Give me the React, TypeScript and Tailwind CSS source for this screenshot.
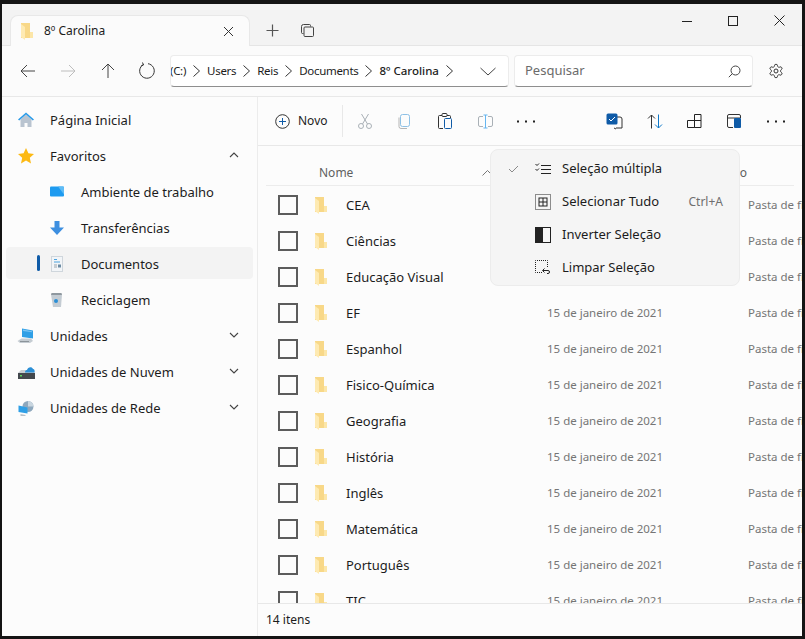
const folders = ["CEA", "Ciências", "Educação Visual", "EF", "Espanhol", "Fisico-Química", "Geografia", "História", "Inglês", "Matemática", "Português", "TIC"];

function FolderIcon({ className }: { className?: string }) {
  return (
    <svg className={className} width="12" height="17" viewBox="0 0 12 17">
      <path d="M0 0h9v15H0z" fill="#f8d888" />
      <path d="M9 9h3v6H9z" fill="#fce6a8" />
      <path d="M0 1l4 3v13l-4-3z" fill="#feeab2" />
    </svg>
  );
}

function Stroke({ children, size = 20, className }: { children: React.ReactNode; size?: number; className?: string }) {
  return (
    <svg className={className} width={size} height={size} viewBox="0 0 20 20" fill="none" stroke="currentColor" strokeWidth="1">
      {children}
    </svg>
  );
}

function Chevron({ up }: { up?: boolean }) {
  return (
    <svg className="ml-auto mr-[14px]" width="10" height="6" viewBox="0 0 10 6" fill="none" stroke="#444" strokeWidth="1.1">
      <path d={up ? "M1 5l4-4 4 4" : "M1 1l4 4 4-4"} />
    </svg>
  );
}

function HomeIcon() {
  return (
    <svg width="18" height="18" viewBox="0 0 18 18">
      <path d="M3.5 8.5L9 3.5l5.500 5V16h-4v-4h-3v4h-4z" fill="#b9c4d0" />
      <path d="M1 8.500L9 1.500l8 7-1.200 1L9 3.500 2.200 9.500z" fill="#2b9be8" />
    </svg>
  );
}

function StarIcon() {
  return (
    <svg width="18" height="18" viewBox="0 0 18 18">
      <path d="M9 1l2.400 5.300 5.600.6-4.200 3.800 1.200 5.700L9 13.500l-5 2.900 1.200-5.700L1 6.900l5.600-.6z" fill="#fcb913" />
    </svg>
  );
}

function DesktopIcon() {
  return (
    <svg width="16" height="14" viewBox="0 0 16 14">
      <rect x="1" y="1.500" width="14" height="10" rx="1" fill="#1e9bf0" />
      <path d="M9 1.500h5a1 1 0 0 1 1 1v7z" fill="#5fbcf6" />
    </svg>
  );
}

function DownloadIcon() {
  return (
    <svg width="16" height="16" viewBox="0 0 16 16">
      <path d="M5.500 1h5v6.500H15L8 15 1 7.500h4.500z" fill="#3d8fe0" />
    </svg>
  );
}

function DocsIcon() {
  return (
    <svg width="14" height="16" viewBox="0 0 14 16">
      <rect x="1.500" y="0.500" width="11" height="15" fill="#f2f5f8" stroke="#cfd6dc" />
      <path d="M4 3.500h3M4 6h6" stroke="#4da3de" />
      <path d="M4 9h3M4 11h3" stroke="#9aa5ad" />
      <rect x="8" y="8.500" width="3" height="3" fill="#6b8ba3" />
    </svg>
  );
}

function BinIcon() {
  return (
    <svg width="14" height="16" viewBox="0 0 14 16">
      <path d="M1 2.500h11L11 15H3z" fill="#c4ccd3" />
      <path d="M1.500 1h10l.5 2H1z" fill="#8f989f" />
      <circle cx="6" cy="9" r="2" fill="#2b8fd6" />
    </svg>
  );
}

function PcIcon() {
  return (
    <svg width="18" height="16" viewBox="0 0 18 16">
      <path d="M5 0.500l11 2v8l-11-1.500z" fill="#2f9fe6" />
      <path d="M6 1.500l9 1.700v1L6 3z" fill="#7cc4f2" />
      <path d="M0.500 13l4-2.500h9.500l2 2.500-3 2H3z" fill="#c5ccd2" />
      <path d="M3 13.500h9" stroke="#8c949a" />
    </svg>
  );
}

function CloudDriveIcon() {
  return (
    <svg width="17" height="13" viewBox="0 0 17 13">
      <path d="M3 4h12l2 3H0z" fill="#c9ced3" />
      <path d="M0 7h17v6H0z" fill="#43484d" />
      <rect x="2" y="9" width="2" height="1.500" fill="#5fd35f" />
      <path d="M7 6.500c0-1.500.5-2.500 2-2.500C9.500 1 14 0 15 3c1.500 0 2 2 1.500 3.500z" fill="#2b8fd6" />
    </svg>
  );
}

function NetIcon() {
  return (
    <svg width="16" height="15" viewBox="0 0 16 15">
      <circle cx="10" cy="5.500" r="5.500" fill="#8fa8bd" />
      <path d="M10 0a5.500 5.500 0 0 1 5.500 5.500H10z" fill="#c9d6e0" />
      <path d="M0.500 4.500l9 2v6l-9-1.500z" fill="#2f9fe6" />
      <path d="M2.500 13l5 1v1h-5z" fill="#b8c0c7" />
    </svg>
  );
}

function SideItem({ icon, label, child, active, chevron }: { icon: React.ReactNode; label: string; child?: boolean; active?: boolean; chevron?: "up" | "down" }) {
  return (
    <div className={`relative mx-1 flex h-8 items-center rounded-[4px] ${active ? "bg-[#f3f3f3]" : ""} ${child ? "pl-[41px]" : "pl-[10px]"}`}>
      {active && <div className="absolute left-[31px] top-[8px] h-4 w-[3px] rounded-sm bg-[#0f5ba7]" />}
      <span className="flex w-[20px] justify-center pt-[2px]">{icon}</span>
      <span className={`ml-[14px] whitespace-nowrap pt-[3px] text-[13px]`}>{label}</span>
      {chevron && <Chevron up={chevron === "up"} />}
    </div>
  );
}

function Row({ name }: { name: string }) {
  return (
    <div className="flex h-9 shrink-0 items-center whitespace-nowrap text-[13px]">
      <div className="ml-[12px] h-5 w-5 shrink-0 border-2 border-[#5c5c5c]" />
      <FolderIcon className="ml-[17px] shrink-0" />
      <span className="ml-[19px] w-[201px] shrink-0 pt-[2px]">{name}</span>
      <span className="w-[201px] shrink-0 text-[11.500px] text-[#757575]">15 de janeiro de 2021</span>
      <span className="text-[11.500px] text-[#757575]">Pasta de ficheiros</span>
    </div>
  );
}

function MenuItem({ icon, label, check, shortcut }: { icon: React.ReactNode; label: string; check?: boolean; shortcut?: string }) {
  return (
    <div className="flex h-[33px] items-center text-[13px]">
      <span className="flex w-[44px] justify-center text-[#8a8a8a]">
        {check && (
          <svg width="11" height="8" viewBox="0 0 11 8" fill="none" stroke="currentColor" strokeWidth="1"><path d="M1 4l3 3 6-6" /></svg>
        )}
      </span>
      <span className="flex w-[27px] shrink-0 justify-start">{icon}</span>
      <span className="whitespace-nowrap">{label}</span>
      {shortcut && <span className="ml-auto mr-4 text-xs text-[#6f6f6f]">{shortcut}</span>}
    </div>
  );
}

export default function App() {
  return (
    <div className="h-[639px] w-[805px] overflow-hidden bg-[#141414] pb-[3px] pl-[2px] pr-[3px] pt-1 font-['Noto_Sans','Open_Sans',sans-serif] text-[#1c1c1c]">
      <div className="relative flex h-[632px] w-[800px] flex-col overflow-hidden bg-[#fcfcfc]">
        {/* title bar */}
        <div className="flex h-[42px] shrink-0 items-end border-b border-[#e5e5e5] bg-[#f3f3f3]">
          <div className="relative top-px ml-2 flex h-[31px] w-[240px] items-center rounded-t-lg border border-b-0 border-[#e8e8e8] bg-[#fbfbfb] pl-[10px]">
            <FolderIcon />
            <span className="ml-[11px] text-xs">8º Carolina</span>
            <svg className="ml-auto mr-[15px]" width="11" height="11" viewBox="0 0 11 11" fill="none" stroke="#333" strokeWidth="1"><path d="M1 1l9 9M10 1l-9 9" /></svg>
          </div>
          <svg className="mb-[8px] ml-[16px]" width="13" height="13" viewBox="0 0 13 13" fill="none" stroke="#555" strokeWidth="1.2"><path d="M6.500 0.500v12M0.500 6.500h12" /></svg>
          <svg className="mb-[8px] ml-[22px]" width="13" height="13" viewBox="0 0 13 13" fill="none" stroke="#444" strokeWidth="1"><path d="M2.500 9.500h-1a1 1 0 0 1-1-1v-6a2 2 0 0 1 2-2h6a1 1 0 0 1 1 1v1" /><rect x="3" y="3" width="9.500" height="9.500" rx="1" /></svg>
          <div className="mb-auto ml-auto flex h-[41px] items-center gap-[36px] pb-[8px] pr-[17px]">
            <svg width="10" height="10" viewBox="0 0 10 10" fill="none" stroke="#222"><path d="M0 5.500h10" /></svg>
            <svg width="10" height="10" viewBox="0 0 10 10" fill="none" stroke="#222"><rect x="0.500" y="0.500" width="9" height="9" /></svg>
            <svg width="11" height="11" viewBox="0 0 11 11" fill="none" stroke="#222"><path d="M0.500 0.500l10 10M10.500 0.500l-10 10" /></svg>
          </div>
        </div>

        {/* address bar */}
        <div className="flex h-[51px] shrink-0 items-center border-b border-[#e8e8e8] bg-[#fbfbfb] pl-[16px]">
          <Stroke className="text-[#444]"><path d="M3 10h14M3 10l6-6M3 10l6 6" /></Stroke>
          <Stroke className="ml-[20px] text-[#bdbdbd]"><path d="M3 10h14M17 10l-6-6M17 10l-6 6" /></Stroke>
          <Stroke className="ml-[20px] text-[#444]"><path d="M10 3v14M10 3l-6 6M10 3l6 6" /></Stroke>
          <Stroke className="ml-[20px] text-[#333]"><path d="M5.500 3.500a7.300 7.300 0 1 0 4.500-.8M4.500 1.500l1 2.500-2.500 1" /></Stroke>
          <div className="ml-[12px] flex h-8 w-[339px] items-center overflow-hidden whitespace-nowrap rounded-[4px] border border-[#ececec] border-b-[#8e8e8e] bg-white text-[11.500px] tracking-[-0.3px]">
            <span className="-ml-px">(C:)</span>
            <Sep />
            <span>Users</span>
            <Sep />
            <span>Reis</span>
            <Sep />
            <span>Documents</span>
            <Sep />
            <span className="font-medium tracking-normal">8º Carolina</span>
            <Sep />
            <svg className="ml-auto mr-[12px]" width="16" height="9" viewBox="0 0 16 9" fill="none" stroke="#444"><path d="M0.500 1l7.500 7 7.500-7" /></svg>
          </div>
          <div className="ml-[5px] flex h-8 w-[239px] items-center rounded-[4px] border border-[#ececec] border-b-[#8e8e8e] bg-white pl-[10px] pr-[11px] text-[13px] text-[#6b6b6b]">
            Pesquisar
            <svg className="ml-auto" width="13" height="13" viewBox="0 0 13 13" fill="none" stroke="#444"><circle cx="7.500" cy="5.500" r="4.500" /><path d="M4.300 8.700L0.800 12.200" /></svg>
          </div>
          <svg className="ml-[15px]" width="16" height="16" viewBox="0 0 24 24" fill="none" stroke="#333" strokeWidth="1.500"><path d="M12.220 2h-.44a2 2 0 0 0-2 2v.18a2 2 0 0 1-1 1.730l-.43.25a2 2 0 0 1-2 0l-.15-.08a2 2 0 0 0-2.730.73l-.22.38a2 2 0 0 0 .73 2.730l.15.1a2 2 0 0 1 1 1.720v.51a2 2 0 0 1-1 1.740l-.15.09a2 2 0 0 0-.73 2.730l.22.38a2 2 0 0 0 2.730.73l.15-.08a2 2 0 0 1 2 0l.43.25a2 2 0 0 1 1 1.730V20a2 2 0 0 0 2 2h.44a2 2 0 0 0 2-2v-.18a2 2 0 0 1 1-1.730l.43-.25a2 2 0 0 1 2 0l.15.08a2 2 0 0 0 2.730-.73l.22-.39a2 2 0 0 0-.73-2.730l-.15-.08a2 2 0 0 1-1-1.740v-.5a2 2 0 0 1 1-1.740l.15-.09a2 2 0 0 0 .73-2.730l-.22-.38a2 2 0 0 0-2.730-.73l-.15.08a2 2 0 0 1-2 0l-.43-.25a2 2 0 0 1-1-1.730V4a2 2 0 0 0-2-2z" /><circle cx="12" cy="12" r="3" /></svg>
        </div>

        <div className="flex min-h-0 flex-1">
          {/* sidebar */}
          <div className="flex w-[256px] shrink-0 flex-col gap-1 border-r border-[#ececec] pt-[6px]">
            <SideItem icon={<HomeIcon />} label="Página Inicial" />
            <SideItem icon={<StarIcon />} label="Favoritos" chevron="up" />
            <SideItem child icon={<DesktopIcon />} label="Ambiente de trabalho" />
            <SideItem child icon={<DownloadIcon />} label="Transferências" />
            <SideItem child active icon={<DocsIcon />} label="Documentos" />
            <SideItem child icon={<BinIcon />} label="Reciclagem" />
            <SideItem icon={<PcIcon />} label="Unidades" chevron="down" />
            <SideItem icon={<CloudDriveIcon />} label="Unidades de Nuvem" chevron="down" />
            <SideItem icon={<NetIcon />} label="Unidades de Rede" chevron="down" />
          </div>

          {/* main */}
          <div className="relative flex min-w-0 flex-1 flex-col">
            <div className="flex h-[49px] shrink-0 items-center border-b border-[#e8e8e8]">
              <svg className="ml-[17px]" width="15" height="15" viewBox="0 0 15 15" fill="none"><circle cx="7.500" cy="7.500" r="6.800" stroke="#333" /><path d="M7.500 4v7M4 7.500h7" stroke="#0f5ba7" /></svg>
              <span className="ml-[8px] text-xs">Novo</span>
              <div className="ml-[14px] h-8 w-px bg-[#e8e8e8]" />
              <svg className="ml-[15px]" width="14" height="16" viewBox="0 0 14 16" fill="none" stroke="#a9b0b6"><circle cx="3" cy="13" r="2.500" /><circle cx="11" cy="13" r="2.500" /><path d="M3.500 1L9.500 11M10.500 1L4.500 11" /></svg>
              <svg className="ml-[26px]" width="12" height="15" viewBox="0 0 12 15" fill="none"><path d="M1 3.500v9a2 2 0 0 0 2 2h6" stroke="#b5b5b5" /><rect x="2.500" y="0.500" width="9" height="12" rx="2" stroke="#8ec1e6" /></svg>
              <svg className="ml-[28px]" width="14" height="16" viewBox="0 0 14 16" fill="none"><path d="M4 2.500H1.500a1 1 0 0 0-1 1v11a1 1 0 0 0 1 1H5M9 2.500h2.500a1 1 0 0 1 1 1V5" stroke="#333" /><rect x="4" y="0.500" width="5" height="3" rx="1" stroke="#333" /><rect x="6.500" y="5.500" width="7" height="10" rx="1" stroke="#0f5ba7" /></svg>
              <svg className="ml-[26px]" width="15" height="15" viewBox="0 0 15 15" fill="none"><path d="M5 2.500H2a1.500 1.500 0 0 0-1.500 1.500v7A1.500 1.500 0 0 0 2 12.500h3M10 2.500h3A1.500 1.500 0 0 1 14.500 4v7a1.500 1.500 0 0 1-1.500 1.500h-3" stroke="#a9b0b6" /><path d="M7.500 1v13M5.500 1h4M5.500 14h4" stroke="#64b5f0" /></svg>
              <Dots className="ml-[24px]" />
              <svg className="ml-[71px]" width="17" height="17" viewBox="0 0 17 17" fill="none"><path d="M11 4h3a2 2 0 0 1 2 2v9h-6M8 15l2 1" stroke="#333" /><rect x="0.500" y="0.500" width="11" height="11" rx="1.500" fill="#0f5ba7" /><path d="M3 6l2 2 4-4" stroke="#fff" /></svg>
              <svg className="ml-[24px]" width="16" height="15" viewBox="0 0 16 15" fill="none"><path d="M4.500 14.500V1M1 4.500L4.500 1 8 4.500" stroke="#333" /><path d="M11.500 0.500V14M8 10.500l3.500 3.500 3.500-3.500" stroke="#0f78c8" /></svg>
              <svg className="ml-[24px]" width="15" height="14" viewBox="0 0 15 14" fill="none" stroke="#222"><path d="M0.500 6.500h7v7h-7zM7.500 0.500h6.500v13h-6.500zM7.500 6.500h6.500" /></svg>
              <svg className="ml-[25px]" width="14" height="14" viewBox="0 0 14 14" fill="none"><path d="M6 13.500H2A1.500 1.500 0 0 1 .5 12V2A1.500 1.500 0 0 1 2 .5h10A1.500 1.500 0 0 1 13.500 2v2H.5" stroke="#333" /><rect x="7" y="4" width="7" height="10" rx="1" fill="#0f5ba7" /></svg>
              <Dots className="ml-[26px]" />
            </div>

            <div className="mx-2 flex h-10 shrink-0 items-center border-b border-[#ececec] pt-[14px] text-xs text-[#5f5f5f]">
              <span className="ml-[53px]">Nome</span>
              <svg className="ml-[129px]" width="11" height="6" viewBox="0 0 11 6" fill="none" stroke="#777"><path d="M0.500 5.500l5-5 5 5" /></svg>
              <span className="ml-auto mr-[47px]">Tipo</span>
            </div>

            <div className="flex min-h-0 flex-1 flex-col overflow-hidden pl-2 pt-px">
              {folders.map((name) => (
                <Row key={name} name={name} />
              ))}
            </div>

            <div className="flex h-[33px] shrink-0 items-center border-t border-[#e8e8e8] pl-2 text-xs">14 itens</div>

            {/* selection menu */}
            <div className="absolute left-[232px] top-[52px] w-[250px] rounded-lg border border-[#ececec] bg-[#f5f5f5] pb-px pt-[2px]">
              <MenuItem check label="Seleção múltipla" icon={<ListCheck />} />
              <MenuItem label="Selecionar Tudo" shortcut="Ctrl+A" icon={<SelectAll />} />
              <MenuItem label="Inverter Seleção" icon={<Invert />} />
              <MenuItem label="Limpar Seleção" icon={<ClearSel />} />
            </div>
          </div>
        </div>
      </div>
    </div>
  );
}

function Sep() {
  return (
    <svg className="mx-[7px] shrink-0" width="7" height="12" viewBox="0 0 7 12" fill="none" stroke="#333"><path d="M0.500 0.500l6 5.500-6 5.500" /></svg>
  );
}

function Dots({ className }: { className?: string }) {
  return (
    <svg className={className} width="18" height="3" viewBox="0 0 18 3" fill="#222"><rect x="0" y="0.500" width="2" height="2" /><rect x="8" y="0.500" width="2" height="2" /><rect x="16" y="0.500" width="2" height="2" /></svg>
  );
}

function ListCheck() {
  return (
    <svg width="16" height="12" viewBox="0 0 16 12" fill="none" stroke="#222"><path d="M6 2.500h10M6 6.500h10M6 10.500h10M0.500 1l1.500 1.500L4 0.500M0.500 6l1.500 1.500L4 5.500" /></svg>
  );
}

function SelectAll() {
  return (
    <svg width="16" height="16" viewBox="0 0 16 16" fill="none"><rect x="0.500" y="0.500" width="15" height="15" stroke="#222" strokeDasharray="1 1" /><rect x="4" y="4" width="8" height="8" stroke="#222" /><path d="M8 4v8M4 8h8" stroke="#222" /></svg>
  );
}

function Invert() {
  return (
    <svg width="16" height="16" viewBox="0 0 16 16" fill="none"><rect x="0.500" y="0.500" width="15" height="15" stroke="#222" /><rect x="0" y="0" width="8" height="16" fill="#222" /></svg>
  );
}

function ClearSel() {
  return (
    <svg width="16" height="16" viewBox="0 0 16 16" fill="none" stroke="#222"><path d="M12.500 7V.5H.5v12H8" strokeDasharray="1 1" /><path d="M9 10.500h5a1.500 1.500 0 0 1 0 3h-1M10.500 8.500L8.500 10.500l2 2" transform="translate(-1 0)" /></svg>
  );
}
